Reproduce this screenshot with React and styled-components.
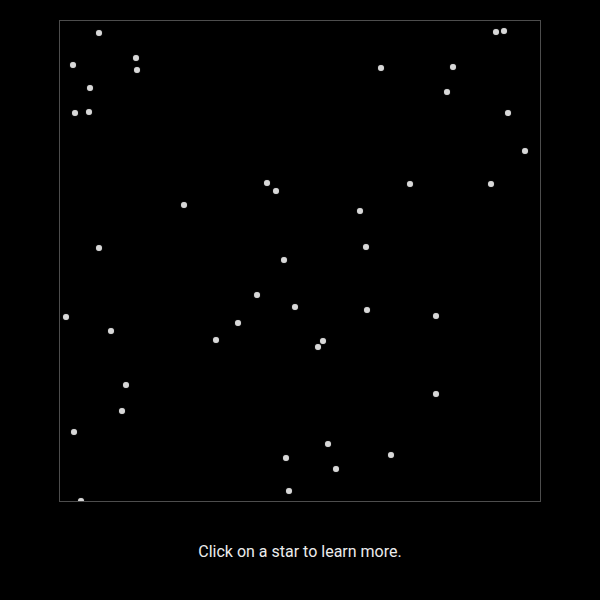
import React from "react";
import styled, { createGlobalStyle } from "styled-components";

const GlobalStyle = createGlobalStyle`
  html, body {
    margin: 0;
    padding: 0;
    background: #000;
  }
  body {
    font-family: Roboto, "Noto Sans", sans-serif;
  }
`;

const Page = styled.div`
  width: 600px;
  height: 600px;
  background: #000;
  display: flex;
  flex-direction: column;
  align-items: center;
  padding-top: 20px;
  box-sizing: border-box;
`;

const Sky = styled.div`
  position: relative;
  width: 480px;
  height: 480px;
  border: 1px solid #4d4d4d;
  overflow: hidden;
  flex-shrink: 0;
`;

const Star = styled.button`
  position: absolute;
  width: 6px;
  height: 6px;
  padding: 0;
  border: none;
  border-radius: 50%;
  background: #d8d8d8;
  box-shadow: 0 0 1px rgba(220, 220, 220, 0.5);
  transform: translate(-50%, -50%);
  cursor: pointer;
`;

const Hint = styled.p`
  margin: 40px 0 0;
  font-size: 16px;
  line-height: 19px;
  color: #ececec;
`;

// star coordinates in page pixels; the sky's content box starts at (60, 21)
const STARS = [
  [99, 33], [136, 58], [73, 65], [137, 70], [90, 88], [75, 113], [89, 112],
  [267, 183], [276, 191], [184, 205], [99, 248], [284, 260],
  [496, 32], [504, 31], [381, 68], [453, 67], [447, 92], [508, 113],
  [525, 151], [410, 184], [491, 184], [360, 211], [366, 247],
  [257, 295], [295, 307], [66, 317], [111, 331], [238, 323], [216, 340],
  [126, 385], [122, 411], [74, 432], [286, 458], [289, 491], [81, 501],
  [367, 310], [436, 316], [323, 341], [318, 347], [436, 394],
  [328, 444], [391, 455], [336, 469],
];

export default function App() {
  return (
    <>
      <GlobalStyle />
      <Page>
        <Sky>
          {STARS.map(([x, y], i) => (
            <Star
              key={i}
              aria-label={`Star ${i + 1}`}
              style={{ left: `${x - 60}px`, top: `${y - 21}px` }}
            />
          ))}
        </Sky>
        <Hint>Click on a star to learn more.</Hint>
      </Page>
    </>
  );
}
